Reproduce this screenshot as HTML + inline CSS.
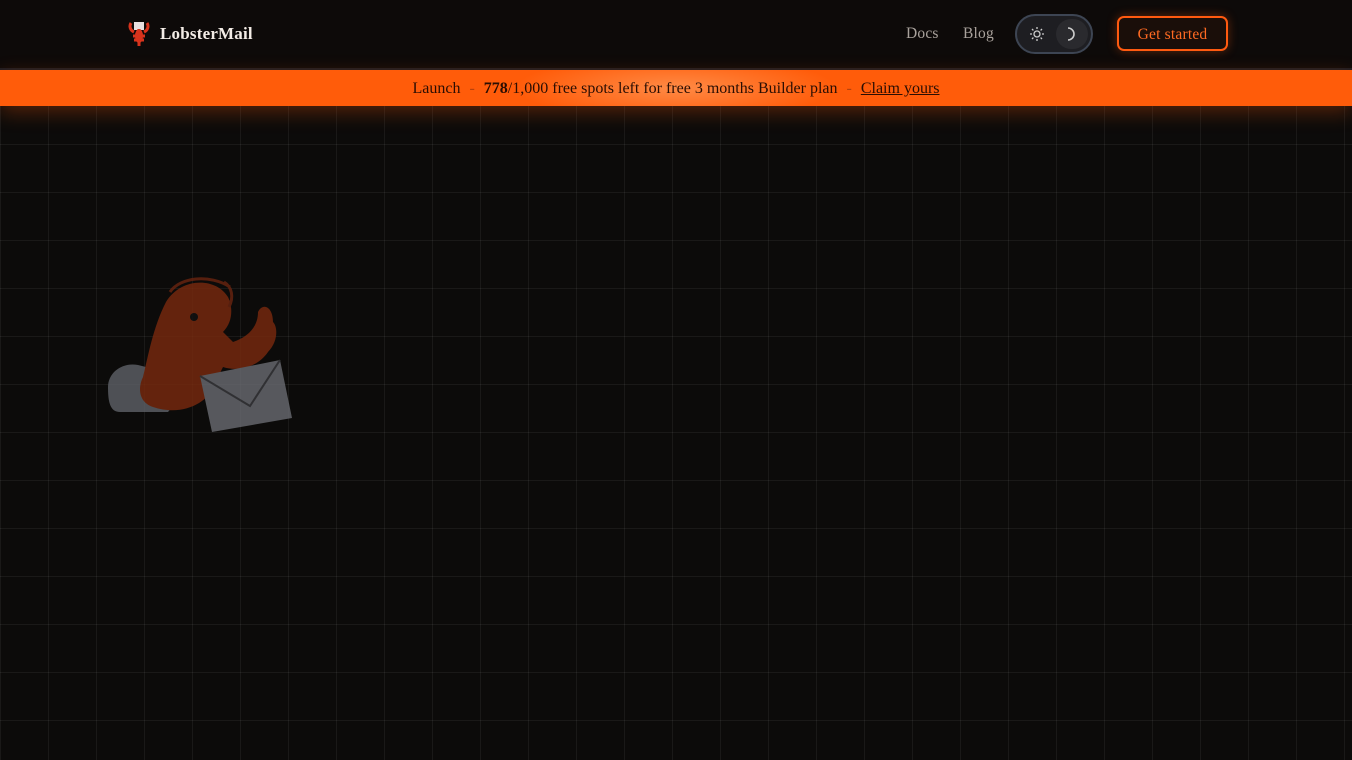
<!DOCTYPE html>
<html><head><meta charset="utf-8"><style>
*{margin:0;padding:0;box-sizing:border-box}
body{width:1352px;height:760px;overflow:hidden;background:#0c0b0a;font-family:"Liberation Serif",serif;position:relative;
background-image:linear-gradient(to right,rgba(255,255,255,0.06) 1px,transparent 1px),linear-gradient(to bottom,rgba(255,255,255,0.06) 1px,transparent 1px);background-size:48px 48px;background-position:0 0}
header{position:absolute;left:0;top:0;width:1352px;height:70px;background:#0d0a09;border-bottom:2px solid #1c1c22}
.logo{position:absolute;left:128px;top:20px;display:flex;align-items:center;gap:10px;color:#f3ece6;font-weight:bold;font-size:17px;letter-spacing:0.2px}
.nav{position:absolute;top:25px;font-size:15.5px;color:#a9a29c;letter-spacing:0.2px}
.toggle{position:absolute;left:1015px;top:14px;width:78px;height:40px;border-radius:20px;border:2px solid #3d4553;background:#1e1e22}
.toggle .k{position:absolute;right:3px;top:3px;width:32px;height:30px;border-radius:16px;background:#2a2a2e}
.btn{position:absolute;left:1117px;top:16px;width:111px;height:35px;border:2px solid #ff5a10;border-radius:7px;color:#ff6a22;font-size:15.5px;text-align:center;line-height:34px;background:#1a0e09;box-shadow:0 0 10px rgba(255,90,16,0.35);letter-spacing:0.2px}
.banner{position:absolute;left:0;top:70px;width:1352px;height:36px;background:radial-gradient(ellipse 200px 40px at 676px 18px,#ff8a45,#ff5c0a 80%);color:#2a0e03;font-size:16px;text-align:center;line-height:37px;box-shadow:0 6px 20px rgba(255,90,10,0.3);letter-spacing:0px}
.banner .d{color:#b8420c;margin:0 9px}
.banner u{color:#2a0e03}
</style></head><body>
<header>
<div class="logo"><svg width="22" height="28" viewBox="0 0 22 28"><rect x="6" y="2" width="10" height="8" fill="#e8e0e0"/><path d="M11 9v17M6 12c-4-2-5-6-3-9M16 12c4-2 5-6 3-9M5 16h12M6 20h10" stroke="#d7331c" stroke-width="3" fill="none"/><ellipse cx="11" cy="16" rx="4" ry="7" fill="#d7331c"/></svg>LobsterMail</div>
<div class="nav" style="left:906px">Docs</div>
<div class="nav" style="left:963px">Blog</div>
<div class="toggle"><div class="k"></div>
<svg style="position:absolute;left:12px;top:10px" width="16" height="16" viewBox="0 0 16 16" stroke="#ccc" stroke-width="1.3" fill="none"><circle cx="8" cy="8" r="3"/><path d="M8 1v2M8 13v2M1 8h2M13 8h2M3 3l1.4 1.4M11.6 11.6L13 13M3 13l1.4-1.4M11.6 4.4L13 3"/></svg>
<svg style="position:absolute;left:47px;top:10px" width="14" height="16" viewBox="0 0 14 16" stroke="#ccc" stroke-width="1.6" fill="none"><path d="M4 2a6 6 0 0 1 0 12a5 5 0 0 0 0-12z"/></svg>
</div>
<div class="btn">Get started</div>
</header>
<div class="banner">Launch<span class="d">-</span><b>778</b>/1,000 free spots left for free 3 months Builder plan<span class="d">-</span><u>Claim yours</u></div>
<svg style="position:absolute;left:104px;top:272px;opacity:0.8" width="190" height="162" viewBox="0 0 190 162">
<path d="M4 115c0-15 15-25 30-22l20 5 20 30-10 12H16c-10 0-12-10-12-25z" fill="#5f6268"/>
<path d="M62 30c15-25 50-25 62-5 5 10 5 25-5 35l10 10c15-5 25-15 25-30 5-10 15-5 15 10 5 5 5 20-5 30-10 15-30 20-45 15l-10 20c-5 15-30 30-60 20-15-5-15-20-10-30 5-20 10-50 23-75z" fill="#7a2a0e"/>
<circle cx="90" cy="45" r="4" fill="#111"/>
<path d="M66 20c10-15 40-18 60-5M120 10c8 5 10 15 5 25" stroke="#6a2410" stroke-width="3" fill="none"/>
<path d="M96 104l80-16 12 58-80 14z" fill="#6a6c72"/><path d="M96 104l50 30 30-46" stroke="#3a3a3e" stroke-width="2" fill="none"/>
</svg>
</body></html>
